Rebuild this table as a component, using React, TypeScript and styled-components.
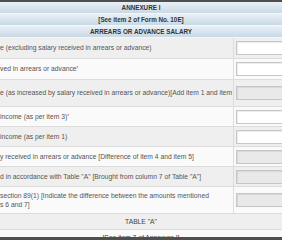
import React from 'react';
import styled, { createGlobalStyle } from 'styled-components';

const GlobalStyle = createGlobalStyle`
  html, body {
    margin: 0;
    padding: 0;
    background: #fff;
  }
  body {
    font-family: 'Liberation Sans', Arial, sans-serif;
  }
`;

const Frame = styled.div`
  height: 240px;
  display: flex;
  flex-direction: column;
  overflow: hidden;
`;

const Edge = styled.div<{ $h: number }>`
  flex: none;
  height: ${p => p.$h}px;
  background: #4f4f4f;
`;

const Sheet = styled.div`
  flex: 1;
  overflow: hidden;
`;

const HeadRow = styled.div`
  height: 11px;
  border-bottom: 1px solid #f3f7fa;
  background: linear-gradient(#e9f0f6, #c8d9e5);
  display: flex;
  align-items: center;
  justify-content: center;
  font-size: 6.3px;
  font-weight: bold;
  color: #333;
`;

const Row = styled.div<{ $alt: boolean; $h: number }>`
  display: grid;
  grid-template-columns: 233px 1fr;
  height: ${p => p.$h}px;
  border-bottom: 1px solid #dcdcdc;
  background: ${p => (p.$alt ? '#efefef' : '#fafafa')};
`;

const Label = styled.div`
  display: flex;
  align-items: center;
  overflow: hidden;
  white-space: pre-line;
  font-size: 6.75px;
  line-height: 9.5px;
  color: #555;
`;

const Req = styled.span`
  color: #e04040;
  font-size: 5px;
  vertical-align: 1px;
`;

const Cell = styled.div`
  display: flex;
  align-items: center;
  padding-left: 2px;
  border-left: 1px solid #dcdcdc;
`;

const Field = styled.input`
  box-sizing: border-box;
  width: 60px;
  height: 14px;
  margin: 0;
  padding: 0 2px;
  border: 1px solid #c6c6c6;
  background: #fff;
  box-shadow: inset 1px 1px 1px rgba(0, 0, 0, 0.08);
  &:disabled {
    background: #e9e9e9;
  }
`;

const Banner = styled.div<{ $alt: boolean }>`
  height: 15px;
  display: flex;
  align-items: center;
  justify-content: center;
  border-bottom: 1px solid #dcdcdc;
  background: ${p => (p.$alt ? '#efefef' : '#fafafa')};
  font-size: 6.7px;
  color: #444;
`;

type Item = { text: string; h: number; req?: boolean; locked?: boolean };

const items: Item[] = [
  { text: 'e (excluding salary received in arrears or advance)', h: 20 },
  { text: 'ved in arrears or advance', h: 20, req: true },
  { text: 'e (as increased by salary received in arrears or advance)[Add item 1 and item', h: 26, locked: true },
  { text: 'income (as per item 3)', h: 19, req: true },
  { text: 'income (as per item 1)', h: 19 },
  { text: 'y received in arrears or advance [Difference of item 4 and item 5]', h: 19, locked: true },
  { text: 'd in accordance with Table "A" [Brought from column 7 of Table "A"]', h: 19, locked: true },
  { text: 'section 89(1) [Indicate the difference between the amounts mentioned\ns 6 and 7]', h: 26, locked: true },
];

export default function App() {
  return (
    <Frame>
      <GlobalStyle />
      <Edge $h={2} />
      <Sheet>
        <HeadRow>ANNEXURE I</HeadRow>
        <HeadRow>[See item 2 of Form No. 10E]</HeadRow>
        <HeadRow>ARREARS OR ADVANCE SALARY</HeadRow>
        {items.map((it, i) => (
          <Row key={i} $alt={i % 2 === 0} $h={it.h}>
            <Label>
              <span>
                {it.text}
                {it.req && <Req>*</Req>}
              </span>
            </Label>
            <Cell>
              <Field readOnly disabled={it.locked} />
            </Cell>
          </Row>
        ))}
        <Banner $alt>TABLE "A"</Banner>
        <Banner $alt={false}>[See item 7 of Annexure I]</Banner>
      </Sheet>
      <Edge $h={3} />
    </Frame>
  );
}
